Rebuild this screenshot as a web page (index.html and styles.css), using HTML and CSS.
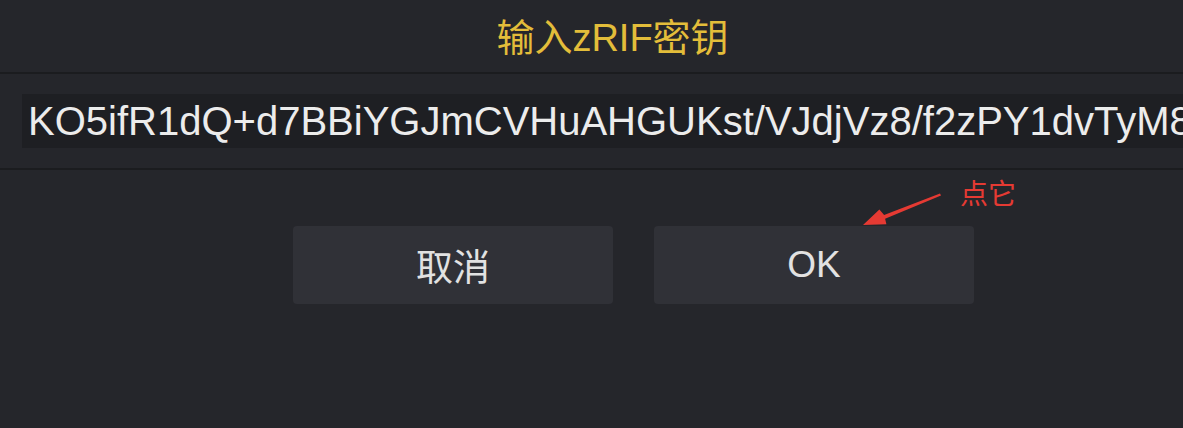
FILE: index.html
```html
<!DOCTYPE html>
<html lang="zh-CN">
<head>
<meta charset="utf-8">
<title>输入zRIF密钥</title>
<link rel="stylesheet" href="styles.css">
</head>
<body>
<div class="dialog">
  <header class="title">输入zRIF密钥</header>
  <div class="field-row">
    <div class="field">KO5ifR1dQ+d7BBiYGJmCVHuAHGUKst/VJdjVz8/f2zPY1dvTyM8</div>
  </div>
  <div class="actions">
    <div class="btn">取消</div>
    <div class="btn btn-ok">OK
      <div class="note">
        <svg class="arrow" width="90" height="40" viewBox="0 0 90 40">
          <path d="M78 1.5 L22.1 22.9 L17.4 17.4 L1 33 L24.4 32.2 L23.1 26.7 L79 3.5 Z" fill="#e53a33"/>
        </svg>
        <span class="note-text">点它</span>
      </div>
    </div>
  </div>
</div>
</body>
</html>
```
FILE: styles.css
```css
* { box-sizing: border-box; }
html, body {
  margin: 0;
  padding: 0;
  background: #25262b;
  width: 1183px;
  height: 428px;
  overflow: hidden;
}
.dialog {
  font-family: "Liberation Sans", "Noto Sans CJK SC", sans-serif;
  color: #e4e4e4;
}
.title {
  height: 74px;
  display: flex;
  align-items: center;
  justify-content: center;
  color: #e3bd3a;
  font-size: 38px;
  padding: 0 0 4px 42px;
  border-bottom: 2px solid #1b1c1f;
}
.field-row {
  height: 96px;
  padding: 20px 0 0 22px;
  border-bottom: 2px solid #1b1c1f;
  overflow: hidden;
}
.field {
  background: #1e1f23;
  height: 54px;
  line-height: 54px;
  padding-left: 6px;
  font-size: 40px;
  white-space: nowrap;
  color: #ececec;
  width: 1300px;
}
.actions {
  display: flex;
  gap: 41px;
  padding: 56px 0 0 293px;
}
.btn {
  position: relative;
  width: 320px;
  height: 78px;
  background: #303137;
  border-radius: 4px;
  display: flex;
  align-items: center;
  justify-content: center;
  font-size: 37px;
  color: #e2e2e2;
}
.note {
  position: absolute;
  left: 208px;
  top: -34px;
}
.arrow {
  position: absolute;
  left: 0;
  top: 0;
}
.note-text {
  position: absolute;
  left: 98px;
  top: -20px;
  font-size: 28px;
  color: #e53a33;
  white-space: nowrap;
  font-family: "Noto Sans CJK SC", sans-serif;
}
```
